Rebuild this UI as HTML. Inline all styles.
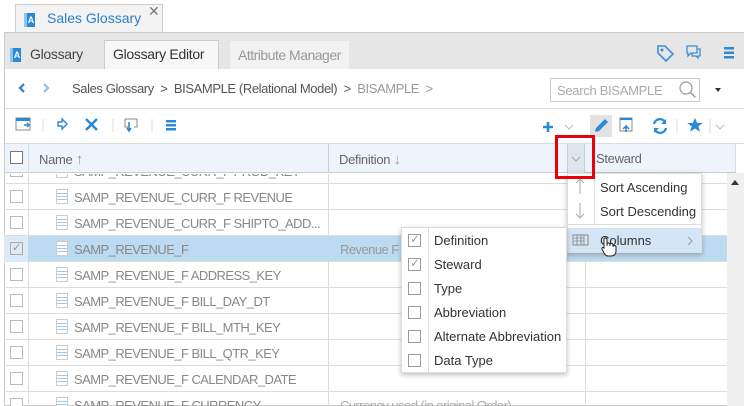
<!DOCTYPE html><html><head><style>
*{box-sizing:border-box;margin:0;padding:0}
body{width:744px;height:406px;overflow:hidden;background:#fff;font-family:"Liberation Sans",sans-serif;font-size:13px;color:#333;position:relative}
.a{position:absolute}
.ic{display:inline-block;width:11px;height:14px;background:#2b8ad6;border-left:3px solid #8cc3ef;color:#fff;font-size:9px;font-weight:bold;text-align:center;line-height:14px}
.row{position:absolute;left:0;width:723px;height:26px;border-bottom:1px solid #ddd}
.cb{position:absolute;width:13px;height:13px;border:1px solid #bbb;background:#fff}
.nm{position:absolute;left:70px;top:6px;color:#888;font-size:13px;letter-spacing:-0.55px;white-space:nowrap}
.doc{position:absolute;left:52px;top:5px;width:12px;height:15px;border:1px solid #ccc;background:linear-gradient(#fff 3px,#9ccbee 3px,#9ccbee 4px,#fff 4px,#fff 6px,#9ccbee 6px,#9ccbee 7px,#fff 7px,#fff 9px,#9ccbee 9px,#9ccbee 10px,#fff 10px)}
.mi{position:absolute;font-size:13px;color:#333}
.mcb{position:absolute;left:7px;width:13px;height:13px;border:1px solid #999;background:#fff}
</style></head><body>
<!-- outer tab -->
<div class="a" style="left:15px;top:4px;width:148px;height:30px;background:#f3f3f3;border:1px solid #ccc;border-bottom:none"></div>
<div class="a" style="left:24px;top:11px"><span class="ic">A</span></div>
<div class="a" style="left:47px;top:10px;color:#2b7fc8;font-size:14px">Sales Glossary</div>
<div class="a" style="left:148px;top:3px;color:#777;font-size:14px">✕</div>
<!-- panel -->
<div class="a" style="left:4px;top:32px;width:740px;height:374px;border:1px solid #ccc;border-right:none"></div>
<div class="a" style="left:5px;top:33px;width:739px;height:36px;background:#e6e6e6"></div>
<div class="a" style="left:10px;top:46px"><span class="ic">A</span></div>
<div class="a" style="left:30px;top:46px;font-size:14px;color:#444;letter-spacing:-0.3px">Glossary</div>
<div class="a" style="left:104px;top:40px;width:115px;height:29px;background:#f7f7f7;border:1px solid #ccc;border-bottom:none"></div>
<div class="a" style="left:113px;top:46px;font-size:14px;color:#333;letter-spacing:-0.3px">Glossary Editor</div>
<div class="a" style="left:230px;top:41px;width:119px;height:28px;background:#f2f2f2"></div>
<div class="a" style="left:238px;top:47px;font-size:14px;color:#999;letter-spacing:-0.5px">Attribute Manager</div>
<svg class="a" style="left:655px;top:43px" width="90" height="20">
<path d="M3 3h7l8 8-7 7-8-8z" fill="none" stroke="#3c8fd6" stroke-width="1.6"/><circle cx="7" cy="7" r="1.5" fill="#3c8fd6"/>
<path d="M32 3h10v7h-6l-3 3v-3h-1z M37 10v3h4l2 2v-2h2V6h-3" fill="none" stroke="#3c8fd6" stroke-width="1.3"/>
<rect x="69" y="4" width="10" height="2.5" fill="#2b8ad6"/><rect x="69" y="8.5" width="10" height="2.5" fill="#2b8ad6"/><rect x="69" y="13" width="10" height="2.5" fill="#2b8ad6"/>
</svg>
<!-- breadcrumb -->
<svg class="a" style="left:16px;top:81px" width="40" height="14"><path d="M8 3l-4 4 4 4" stroke="#2b7fc8" stroke-width="2.2" fill="none"/><path d="M28 3l4 4-4 4" stroke="#8fbfe9" stroke-width="2.2" fill="none"/></svg>
<div class="a" style="left:72px;top:81px;color:#555;font-size:13px;letter-spacing:-0.4px">Sales Glossary &nbsp;&gt;&nbsp; BISAMPLE (Relational Model) &nbsp;&gt;&nbsp; <span style="color:#999">BISAMPLE &nbsp;&gt;</span></div>
<div class="a" style="left:550px;top:78px;width:150px;height:24px;border:1px solid #ccc"></div>
<div class="a" style="left:557px;top:83px;color:#aaa;font-size:13px;letter-spacing:-0.3px">Search BISAMPLE</div>
<svg class="a" style="left:678px;top:80px" width="20" height="20"><circle cx="8" cy="8" r="6" fill="none" stroke="#999" stroke-width="1.2"/><path d="M12.5 12.5l5 5" stroke="#999" stroke-width="1.3"/></svg>
<div class="a" style="left:715px;top:88px;border:3px solid transparent;border-top:4px solid #333"></div>
<div class="a" style="left:5px;top:108px;width:739px;height:1px;background:#ddd"></div>
<!-- toolbar -->
<svg class="a" style="left:14px;top:116px" width="170" height="20">
<rect x="2" y="2" width="14" height="12" fill="none" stroke="#888"/><rect x="2" y="2" width="14" height="3" fill="#2b8ad6"/><path d="M10 9h5m-2-2l2 2-2 2" stroke="#2b8ad6" stroke-width="1.5" fill="none"/>
<line x1="29" y1="3" x2="29" y2="16" stroke="#ddd"/>
<path d="M44 6h4v-3l5 5-5 5v-3h-4z" fill="none" stroke="#2b8ad6" stroke-width="1.4"/>
<path d="M72 3l11 11M83 3L72 14" stroke="#2b8ad6" stroke-width="2.5"/>
<line x1="99" y1="3" x2="99" y2="16" stroke="#ddd"/>
<path d="M111 3h12v8h-3M114 11h-3V3" fill="none" stroke="#888"/><path d="M115 6v8m-2-2l2 3 2-3" stroke="#2b8ad6" stroke-width="1.6" fill="none"/>
<line x1="138" y1="3" x2="138" y2="16" stroke="#ddd"/>
<rect x="152" y="4" width="10" height="2.5" fill="#2b8ad6"/><rect x="152" y="8" width="10" height="2.5" fill="#2b8ad6"/><rect x="152" y="12" width="10" height="2.5" fill="#2b8ad6"/>
</svg>
<div class="a" style="left:590px;top:115px;width:22px;height:22px;background:#e2e2e2"></div>
<svg class="a" style="left:540px;top:115px" width="204" height="22">
<path d="M3 12h10M8 7v10" stroke="#2b8ad6" stroke-width="2.6"/>
<path d="M25 10l4 4 4-4" stroke="#bbb" fill="none"/>
<path d="M55 17l1-4 9-9 3 3-9 9z" fill="#2b8ad6"/>
<rect x="80" y="3" width="12" height="13" fill="none" stroke="#888"/><rect x="80" y="3" width="12" height="2" fill="#2b8ad6"/><path d="M86 17v-6l-3 3m3-3l3 3" stroke="#2b8ad6" stroke-width="1.5" fill="none"/>
<path d="M114 9a6 6 0 0 1 11-2M126 13a6 6 0 0 1-11 2" stroke="#2b8ad6" stroke-width="2.3" fill="none"/><path d="M126 4v5h-5zM114 18v-5h5z" fill="#2b8ad6"/>
<line x1="137" y1="4" x2="137" y2="18" stroke="#ddd"/>
<path d="M155 3l2.3 5h5.4l-4.3 3.3 1.6 5.4-5-3.2-5 3.2 1.6-5.4-4.3-3.3h5.4z" fill="#2b8ad6"/>
<line x1="170" y1="4" x2="170" y2="18" stroke="#ddd"/>
<path d="M176 10l4 4 4-4" stroke="#bbb" fill="none"/>
</svg>
<div class="a" style="left:5px;top:143px;width:739px;height:1px;background:#ddd"></div>
<!-- grid header -->
<div class="a" style="left:5px;top:144px;width:731px;height:29px;background:#edf4fb;border-bottom:1px solid #ccc;border-right:1px solid #ddd"></div>
<div class="a" style="left:28px;top:144px;width:1px;height:29px;background:#d6e0ea"></div>
<div class="a" style="left:328px;top:144px;width:1px;height:29px;background:#ccc"></div>
<div class="a" style="left:567px;top:144px;width:18px;height:29px;background:#dde6ef;border-left:1px solid #ccc;border-right:1px solid #ccc"></div>
<svg class="a" style="left:571px;top:155px" width="10" height="8"><path d="M1 2l4 4 4-4" stroke="#aaa" fill="none"/></svg>
<div class="cb" style="left:10px;top:151px;border-color:#777"></div>
<div class="a" style="left:39px;top:151px;color:#666;letter-spacing:-0.3px">Name <span style="font-size:15px;color:#999">↑</span></div>
<div class="a" style="left:339px;top:151px;color:#666;letter-spacing:-0.3px">Definition <span style="font-size:15px;color:#999">↓</span></div>
<div class="a" style="left:596px;top:151px;color:#666;letter-spacing:-0.3px">Steward</div>
<!-- rows -->
<div class="a" style="left:4px;top:174px;width:723px;height:232px;overflow:hidden">
<div class="a" style="left:24px;top:0;width:1px;height:232px;background:#ddd"></div>
<div class="a" style="left:324px;top:0;width:1px;height:232px;background:#ddd"></div>
<div class="a" style="left:581px;top:0;width:1px;height:232px;background:#ddd"></div>
<div class="row" style="top:-16px"><div class="cb" style="left:6px;top:6px"></div><div class="doc"></div><div class="nm">SAMP_REVENUE_CURR_F PROD_KEY</div></div>
<div class="row" style="top:10px"><div class="cb" style="left:6px;top:6px"></div><div class="doc"></div><div class="nm">SAMP_REVENUE_CURR_F REVENUE</div></div>
<div class="row" style="top:36px"><div class="cb" style="left:6px;top:6px"></div><div class="doc"></div><div class="nm">SAMP_REVENUE_CURR_F SHIPTO_ADD...</div></div>
<div class="row" style="top:62px;background:#bcdaf0"><div class="a" style="left:0;top:0;width:24px;height:26px;background:#dbeaf6"></div><div class="cb" style="left:6px;top:6px;background:#dbeaf6;border-color:#aaa"></div><div class="a" style="left:8px;top:5px;color:#999;font-size:11px">✓</div><div class="doc"></div><div class="nm">SAMP_REVENUE_F</div><div class="nm" style="left:336px;color:#999">Revenue F</div></div>
<div class="row" style="top:88px"><div class="cb" style="left:6px;top:6px"></div><div class="doc"></div><div class="nm">SAMP_REVENUE_F ADDRESS_KEY</div></div>
<div class="row" style="top:114px"><div class="cb" style="left:6px;top:6px"></div><div class="doc"></div><div class="nm">SAMP_REVENUE_F BILL_DAY_DT</div></div>
<div class="row" style="top:140px"><div class="cb" style="left:6px;top:6px"></div><div class="doc"></div><div class="nm">SAMP_REVENUE_F BILL_MTH_KEY</div></div>
<div class="row" style="top:166px"><div class="cb" style="left:6px;top:6px"></div><div class="doc"></div><div class="nm">SAMP_REVENUE_F BILL_QTR_KEY</div></div>
<div class="row" style="top:192px"><div class="cb" style="left:6px;top:6px"></div><div class="doc"></div><div class="nm">SAMP_REVENUE_F CALENDAR_DATE</div></div>
<div class="row" style="top:218px;border:none"><div class="cb" style="left:6px;top:6px"></div><div class="doc"></div><div class="nm">SAMP_REVENUE_F CURRENCY</div><div class="nm" style="left:336px;color:#aaa">Currency used (in original Order)</div></div>
</div>
<!-- scrollbar -->
<div class="a" style="left:727px;top:173px;width:17px;height:233px;background:#f0f0f0"></div>
<div class="a" style="left:731px;top:180px;border:4px solid transparent;border-bottom:5px solid #333;border-top:none"></div>
<!-- menu 1 -->
<div class="a" style="left:567px;top:173px;width:135px;height:80px;background:#fff;box-shadow:0 2px 5px rgba(0,0,0,.25);border:1px solid #ddd"></div>
<div class="a" style="left:594px;top:174px;width:1px;height:50px;background:#ddd"></div>
<div class="a" style="left:568px;top:224px;width:133px;height:1px;background:#ddd"></div>
<div class="a" style="left:568px;top:228px;width:133px;height:24px;background:#d4e6f6"></div>
<svg class="a" style="left:574px;top:177px" width="12" height="44"><path d="M6 2v15M2 6l4-4 4 4M6 26v15M2 37l4 4 4-4" stroke="#aaa" fill="none"/></svg>
<div class="mi" style="left:600px;top:180px">Sort Ascending</div>
<div class="mi" style="left:600px;top:204px">Sort Descending</div>
<svg class="a" style="left:572px;top:233px" width="18" height="14"><rect x="1" y="2" width="15" height="10" fill="none" stroke="#888"/><path d="M5 2v10M9 2v10M12 2v10M2 5h10M2 8h10" stroke="#888" stroke-width=".8"/></svg>
<div class="mi" style="left:600px;top:233px">Columns</div>
<svg class="a" style="left:686px;top:236px" width="8" height="10"><path d="M2 1l4 4-4 4" stroke="#999" fill="none"/></svg>
<svg class="a" style="left:598px;top:236px" width="20" height="22"><path d="M6 12V3.5a1.5 1.5 0 0 1 3 0V10 8.5a1.5 1.5 0 0 1 3 0V10 9a1.5 1.5 0 0 1 3 0V11a1.5 1.5 0 0 1 3 0v4c0 3-2 5-5 5h-3c-2 0-3-1-4-3l-2-4c-.6-1.2 1-2 2-1z" fill="#fff" stroke="#222" stroke-width="1"/></svg>
<!-- menu 2 -->
<div class="a" style="left:401px;top:227px;width:166px;height:146px;background:#fff;box-shadow:0 2px 5px rgba(0,0,0,.25);border:1px solid #ddd"></div>
<div class="a" style="left:428px;top:228px;width:1px;height:144px;background:#ddd"></div>
<div class="a" style="left:401px;top:227px;width:1px;height:1px">
<div class="mcb" style="top:7px"></div><div class="a" style="left:9px;top:5px;color:#999;font-size:12px">✓</div>
<div class="mcb" style="top:31px"></div><div class="a" style="left:9px;top:29px;color:#999;font-size:12px">✓</div>
<div class="mcb" style="top:55px"></div><div class="mcb" style="top:79px"></div><div class="mcb" style="top:103px"></div><div class="mcb" style="top:127px"></div>
</div>
<div class="mi" style="left:434px;top:233px">Definition</div>
<div class="mi" style="left:434px;top:257px">Steward</div>
<div class="mi" style="left:434px;top:281px">Type</div>
<div class="mi" style="left:434px;top:305px">Abbreviation</div>
<div class="mi" style="left:434px;top:329px">Alternate Abbreviation</div>
<div class="mi" style="left:434px;top:353px">Data Type</div>
<!-- red box -->
<div class="a" style="left:555px;top:135px;width:40px;height:44px;border:3px solid #e8000b"></div>
</body></html>
